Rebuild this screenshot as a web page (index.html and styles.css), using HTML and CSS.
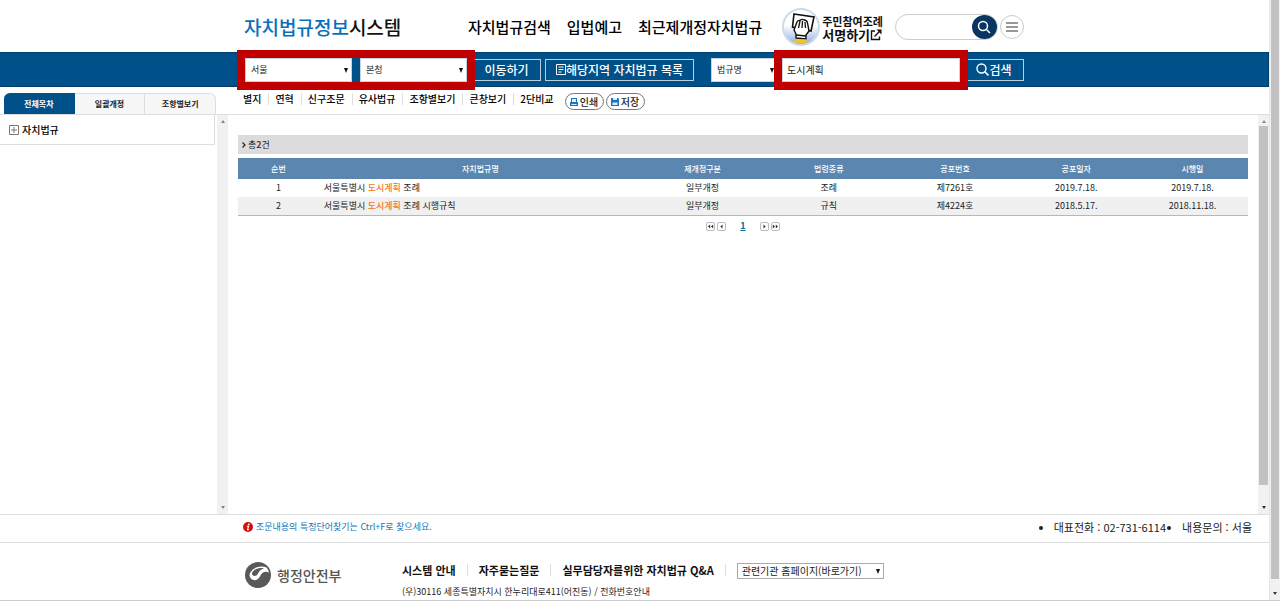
FILE: index.html
```html
<!DOCTYPE html>
<html lang="ko">
<head>
    <meta charset="UTF-8">
    <meta name="viewport" content="width=device-width, initial-scale=1.0">
    <title>자치법규정보시스템</title>
    <link rel="stylesheet" href="styles.css">
</head>
<body>
    <div class="window">
        <div class="page">
            <header class="header">
                <a class="logo" href="#"><span>자치법규정보</span>시스템</a>
                <nav class="main-nav">
                    <a href="#">자치법규검색</a>
                    <a href="#">입법예고</a>
                    <a href="#">최근제개정자치법규</a>
                </nav>
                <a class="petition" href="#">
                    <svg class="petition-icon" viewBox="0 0 38 38" width="38" height="38">
                        <defs>
                            <linearGradient id="sky" x1="0" y1="0" x2="0" y2="1">
                                <stop offset="0.45" stop-color="#fff"/>
                                <stop offset="1" stop-color="#8fa9e6"/>
                            </linearGradient>
                        </defs>
                        <circle cx="19" cy="19" r="18" fill="url(#sky)" stroke="#c9dce9" stroke-width="2"/>
                        <path d="M12 6 L32 9 L29 23 L10.500 19 Z" fill="#fff" stroke="#111" stroke-width="1.6"/>
                        <path d="M14 30 L14 26 L12 22 L15 14 Q16 12 18 12.500 Q20 10.500 22 12 Q25 12 25.500 15 L27 23 L24 27 L24 31 Z" fill="#fff" stroke="#111" stroke-width="1.4" stroke-linejoin="round"/>
                        <path d="M18 13 L16.500 20 M20.500 13 L20 20 M23 14 L23.500 20 M14 27 L24 28" fill="none" stroke="#111" stroke-width="1.3"/>
                        <path d="M12.500 31 L24.500 31.500 V34.500 Q18 36 12 34 Z" fill="#f7c51e"/>
                    </svg>
                    <span class="petition-text">
                        <span class="petition-small">주민참여조례</span>
                        <span class="petition-big">서명하기<svg viewBox="0 0 12 12" width="12" height="12"><path d="M5 2 H1.500 V10.500 H9.500 V7.500 M4.500 7.500 L10 2" fill="none" stroke="#111" stroke-width="1.4"/><path d="M6.500 0.500 H11.500 V5.500 Z" fill="#111"/></svg></span>
                    </span>
                </a>
                <form class="site-search">
                    <input type="text" aria-label="통합검색">
                    <button type="button" aria-label="검색">
                        <svg viewBox="0 0 14 14" width="14" height="14"><circle cx="6" cy="6" r="4.500" fill="none" stroke="#fff" stroke-width="1.5"/><path d="M9.500 9.500 L13 13" stroke="#fff" stroke-width="1.5"/></svg>
                    </button>
                </form>
                <button class="menu-button" type="button" aria-label="전체메뉴">
                    <svg viewBox="0 0 12 10" width="12" height="10"><path d="M0 1 H12 M0 5 H12 M0 9 H12" stroke="#777" stroke-width="1.4"/></svg>
                </button>
            </header>

            <form class="search-bar">
                <div class="marked region-fields">
                    <span class="select"><select aria-label="시도"><option>서울</option></select></span>
                    <span class="select"><select aria-label="시군구"><option>본청</option></select></span>
                </div>
                <button class="bar-button go-button" type="button">이동하기</button>
                <button class="bar-button list-button" type="button"><svg viewBox="0 0 10 11" width="10" height="11"><path d="M0.500 0.500 H9.500 V10.500 H0.500 Z M2.500 3 H7.500 M2.500 5.500 H7.500 M2.500 8 H5.500" fill="none" stroke="#fff"/></svg>해당지역 자치법규 목록</button>
                <span class="select kind-select"><select aria-label="검색구분"><option>법규명</option></select></span>
                <div class="marked keyword-field">
                    <input type="text" value="도시계획" aria-label="검색어">
                </div>
                <button class="bar-button find-button" type="button"><svg viewBox="0 0 13 13" width="13" height="13"><circle cx="5.500" cy="5.500" r="4.500" fill="none" stroke="#fff" stroke-width="1.4"/><path d="M8.800 8.800 L12.500 12.500" stroke="#fff" stroke-width="1.6"/></svg>검색</button>
            </form>

            <div class="sub-bar">
                <div class="tabs">
                    <button class="tab active" type="button">전체목차</button>
                    <button class="tab" type="button">일괄개정</button>
                    <button class="tab" type="button">조항별보기</button>
                </div>
                <nav class="tools">
                    <a href="#">별지</a>
                    <a href="#">연혁</a>
                    <a href="#">신구조문</a>
                    <a href="#">유사법규</a>
                    <a href="#">조항별보기</a>
                    <a href="#">큰창보기</a>
                    <a href="#">2단비교</a>
                </nav>
                <div class="tool-buttons">
                    <button type="button"><svg viewBox="0 0 8 8" width="8" height="8"><path d="M1 0 H7 V4 H8 V8 H0 V4 H1 Z" fill="#1b75bb"/><path d="M2 1 H6 V4 H2 Z M1.500 6 H6.500 V7 H1.500 Z" fill="#d8ecfa"/></svg>인쇄</button>
                    <button type="button"><svg viewBox="0 0 8 8" width="8" height="8"><path d="M0 0 H7 L8 1 V8 H0 Z" fill="#1b75bb"/><path d="M2 0 H6 V2 H2 Z M1.500 4.500 H6.500 V7 H1.500 Z" fill="#d8ecfa"/></svg>저장</button>
                </div>
            </div>

            <main class="main">
                <aside class="side">
                    <div class="tree">
                        <svg viewBox="0 0 10 10" width="10" height="10"><path d="M0.500 0.500 H9.500 V9.500 H0.500 Z M2 5 H8 M5 2 V8" fill="none" stroke="#777"/></svg>
                        <a href="#">자치법규</a>
                    </div>
                </aside>
                <div class="scroll side-scroll"><i class="arrow up"></i><i class="arrow down"></i></div>
                <section class="content">
                    <p class="total"><svg viewBox="0 0 4 6" width="4" height="6"><path d="M0.500 0.500 L3 3 L0.500 5.500" fill="none" stroke="#222" stroke-width="1.2"/></svg>총<b>2</b>건</p>
                    <table class="results">
                        <thead>
                            <tr>
                                <th class="col-no">순번</th>
                                <th class="col-name">자치법규명</th>
                                <th class="col-rev">제개정구분</th>
                                <th class="col-kind">법령종류</th>
                                <th class="col-num">공포번호</th>
                                <th class="col-date">공포일자</th>
                                <th>시행일</th>
                            </tr>
                        </thead>
                        <tbody>
                            <tr>
                                <td>1</td>
                                <td class="name"><a href="#">서울특별시 <em>도시계획</em> 조례</a></td>
                                <td>일부개정</td>
                                <td>조례</td>
                                <td>제7261호</td>
                                <td>2019.7.18.</td>
                                <td>2019.7.18.</td>
                            </tr>
                            <tr>
                                <td>2</td>
                                <td class="name"><a href="#">서울특별시 <em>도시계획</em> 조례 시행규칙</a></td>
                                <td>일부개정</td>
                                <td>규칙</td>
                                <td>제4224호</td>
                                <td>2018.5.17.</td>
                                <td>2018.11.18.</td>
                            </tr>
                        </tbody>
                    </table>
                    <div class="paging">
                        <button type="button" aria-label="처음"><svg viewBox="0 0 7 7" width="7" height="7"><path d="M3.200 1.500 V5.500 L1 3.500 Z M6.200 1.500 V5.500 L4 3.500 Z"/></svg></button>
                        <button type="button" aria-label="이전"><svg viewBox="0 0 7 7" width="7" height="7"><path d="M4.500 1.500 V5.500 L2.300 3.500 Z"/></svg></button>
                        <a href="#">1</a>
                        <button type="button" aria-label="다음"><svg viewBox="0 0 7 7" width="7" height="7"><path d="M2.500 1.500 V5.500 L4.700 3.500 Z"/></svg></button>
                        <button type="button" aria-label="마지막"><svg viewBox="0 0 7 7" width="7" height="7"><path d="M0.800 1.500 V5.500 L3 3.500 Z M3.800 1.500 V5.500 L6 3.500 Z"/></svg></button>
                    </div>
                </section>
                <div class="scroll content-scroll"><i class="arrow up"></i><span class="thumb"></span><i class="arrow down"></i></div>
            </main>

            <div class="notice">
                <p class="tip"><svg viewBox="0 0 10 10" width="10" height="10"><circle cx="5" cy="5" r="5" fill="#d80c0c"/><circle cx="5.800" cy="2.400" r="0.900" fill="#fff"/><path d="M3.800 4.200 H5.500 L4.600 7.800 H6" fill="none" stroke="#fff" stroke-width="1.1"/></svg>조문내용의 특정단어찾기는 Ctrl+F로 찾으세요.</p>
                <ul class="contact">
                    <li>대표전화 : 02-731-6114</li>
                    <li>내용문의 : 서울</li>
                </ul>
            </div>

            <footer class="footer">
                <a class="ministry" href="#">
                    <svg viewBox="0 0 26 26" width="26" height="26">
                        <circle cx="13" cy="13" r="13" fill="#595959"/>
                        <path d="M21.500 5.500 C14 2.500 5 7 4.500 13.500 C5.500 19.500 12.500 19.500 15 14.500 C16.500 10.500 20 8.500 24 10.500 C23.500 8.500 22.800 7 21.500 5.500 Z" fill="#fff"/>
                        <path d="M7 11 C9 7 14 5 19 6.500 C14.500 7.500 14 10 12.500 12.500 C10.500 15 6.500 14 7 11 Z" fill="#595959"/>
                    </svg>
                    행정안전부
                </a>
                <div class="footer-info">
                    <nav class="footer-links">
                        <a href="#">시스템 안내</a>
                        <a href="#">자주묻는질문</a>
                        <a href="#">실무담당자를위한 자치법규 Q&amp;A</a>
                    </nav>
                    <address>(우)30116 세종특별자치시 한누리대로411(어진동) / 전화번호안내</address>
                </div>
                <span class="select related"><select aria-label="관련기관"><option>관련기관 홈페이지(바로가기)</option></select></span>
            </footer>
        </div>
        <div class="scroll page-scroll"><span class="thumb"></span><i class="arrow down"></i></div>
    </div>
</body>
</html>
```

FILE: styles.css
```css
:root {
    --blue: #005189;
    --navy: #0a3563;
    --head: #5a86b0;
    --red: #c00000;
    --line: #dedede;
}

* {
    margin: 0;
    padding: 0;
    box-sizing: border-box;
}

body {
    font-family: 'Noto Sans CJK KR', 'Noto Sans', sans-serif;
    font-size: 9px;
    line-height: 18px;
    color: #222;
    background: #fff;
    height: 100vh;
    padding-bottom: 3px;
}

a {
    color: inherit;
    text-decoration: none;
}

button, input, select {
    font: inherit;
    color: inherit;
}

button {
    cursor: pointer;
}

svg {
    display: block;
    flex: none;
}

.window {
    display: flex;
    height: 100%;
    border-bottom: 1px solid #ccc;
}

.page {
    flex: 1;
    min-width: 0;
    display: flex;
    flex-direction: column;
}

/* header */
.header {
    display: flex;
    align-items: center;
    height: 52px;
    padding: 2px 0 0 244px;
}

.logo {
    width: 224px;
    font-size: 19px;
    font-weight: 500;
    color: #111;
}

.logo span {
    color: #0a6ebd;
}

.main-nav {
    display: flex;
    gap: 16px;
    margin-right: 20px;
    font-size: 15px;
    font-weight: 500;
    color: #000;
    white-space: nowrap;
}

.petition {
    display: flex;
    align-items: center;
    gap: 2px;
    margin-right: 12px;
    color: #111;
    font-weight: bold;
}

.petition-text {
    display: flex;
    flex-direction: column;
    padding-top: 2px;
    white-space: nowrap;
}

.petition-small {
    font-size: 11px;
    line-height: 14px;
}

.petition-big {
    display: flex;
    align-items: center;
    font-size: 13px;
    line-height: 14px;
}

.site-search {
    display: flex;
    width: 103px;
    height: 26px;
    margin-right: 2px;
    border: 1px solid #ccc;
    border-radius: 13px;
}

.site-search input {
    flex: 1;
    min-width: 0;
    padding-left: 10px;
    border: 0;
    outline: 0;
    background: transparent;
}

.site-search button {
    display: flex;
    align-items: center;
    justify-content: center;
    width: 25px;
    height: 24px;
    border: 0;
    border-radius: 50%;
    background: var(--navy);
}

.menu-button {
    display: flex;
    align-items: center;
    justify-content: center;
    width: 24px;
    height: 24px;
    border: 1px solid #ccc;
    border-radius: 50%;
    background: #fff;
}

/* blue search bar */
.search-bar {
    display: flex;
    align-items: center;
    height: 35px;
    padding-left: 245px;
    background: var(--blue);
    border: 1px solid #003c6c;
    border-left: 0;
}

.select {
    position: relative;
    display: flex;
}

.select::after {
    content: "";
    position: absolute;
    right: 4px;
    top: 50%;
    margin-top: -2px;
    border: 2px solid transparent;
    border-top: 5px solid #111;
    border-bottom: 0;
    pointer-events: none;
}

.select select {
    appearance: none;
    width: 100%;
    height: 24px;
    padding-left: 5px;
    border: 1px solid #c5d3df;
    border-radius: 0;
    background: #fff;
}

.marked {
    position: relative;
    display: flex;
    gap: 8px;
}

/* thick frame over the fields */
.marked::after {
    content: "";
    position: absolute;
    inset: -8px;
    border: 8px solid var(--red);
    pointer-events: none;
    z-index: 1;
}

.region-fields {
    width: 222px;
    margin-right: 5px;
}

.region-fields .select {
    flex: 1;
}

.kind-select {
    width: 67px;
    margin-left: 17px;
}

.keyword-field {
    width: 178px;
    margin: 0 4px;
}

.keyword-field input {
    width: 100%;
    height: 24px;
    padding-left: 4px;
    border: 1px solid #c5d3df;
    font-size: 10px;
}

.bar-button {
    display: flex;
    align-items: center;
    justify-content: center;
    height: 22px;
    border: 1px solid #b9cfdf;
    background: transparent;
    color: #fff;
    font-size: 12px;
    font-weight: 500;
    white-space: nowrap;
}

.go-button {
    width: 69px;
    margin-right: 4px;
}

.list-button {
    width: 149px;
}

.find-button {
    width: 60px;
}

/* tabs and tools */
.sub-bar {
    display: flex;
    height: 28px;
    border-bottom: 1px solid var(--line);
}

.tabs {
    display: flex;
    width: 243px;
    padding: 6px 27px 0 4px;
}

.tab {
    flex: 1;
    border: 1px solid var(--line);
    border-width: 1px 1px 0 0;
    background: #f7f7f7;
    font-size: 8px;
    font-weight: bold;
    line-height: 20px;
}

.tab.active {
    border-color: var(--blue);
    border-radius: 6px 0 0 0;
    background: var(--blue);
    color: #fff;
}

.tab:last-child {
    border-radius: 0 6px 0 0;
}

.tools {
    display: flex;
    align-items: center;
    height: 24px;
    font-size: 10px;
    font-weight: 500;
    line-height: 12px;
    color: #000;
}

.tools a {
    padding: 0 7px 0 6px;
    border-right: 1px solid var(--line);
}

.tools a:first-child {
    padding-left: 0;
}

.tools a:last-child {
    border-right: 0;
}

.tool-buttons {
    display: flex;
    gap: 2px;
    margin: 6px 0 0 4px;
}

.tool-buttons button {
    display: flex;
    align-items: center;
    justify-content: center;
    gap: 2px;
    width: 39px;
    height: 17px;
    border: 1px solid #777;
    border-radius: 9px;
    background: #fff;
    font-size: 10px;
    font-weight: 500;
    line-height: 14px;
}

/* main area */
.main {
    flex: 1;
    min-height: 0;
    display: flex;
}

.side {
    width: 217px;
    padding-right: 2px;
}

.tree {
    display: flex;
    align-items: center;
    gap: 3px;
    height: 30px;
    padding-left: 9px;
    border: 1px solid var(--line);
    border-width: 0 1px 1px 0;
    font-size: 10px;
    font-weight: 500;
    color: #000;
}

.scroll {
    display: flex;
    flex-direction: column;
    align-items: center;
    justify-content: space-between;
    width: 11px;
    padding: 5px 1px;
    background: #f1f1f1;
}

.arrow {
    border: 2px solid transparent;
}

.arrow.up {
    border-top: 0;
    border-bottom: 3px solid #888;
}

.arrow.down {
    border-bottom: 0;
    border-top: 3px solid #333;
}

.side-scroll .arrow.down {
    border-top-color: #888;
}

.thumb {
    flex: 1;
    width: 100%;
    background: #c1c1c1;
}

.content-scroll .thumb {
    margin: 3px 0 21px;
}

.page-scroll {
    padding-top: 0;
    border-left: 1px solid #e6e6e6;
}

.page-scroll .thumb {
    margin-bottom: 13px;
}

.content {
    flex: 1;
    padding: 20px 10px 0;
}

.total {
    display: flex;
    align-items: center;
    height: 19px;
    margin-bottom: 4px;
    padding-left: 4px;
    background: #dcdcdc;
}

.total svg {
    margin-right: 2px;
}

.total b {
    color: #a01010;
}

.results {
    width: 100%;
    table-layout: fixed;
    border-collapse: collapse;
    border-bottom: 1px solid #9fbdd8;
    text-align: center;
}

.results th {
    height: 21px;
    background: var(--head);
    color: #fff;
    font-size: 8px;
    font-weight: 500;
    line-height: 18px;
}

.results td {
    height: 18px;
}

.results tbody tr:nth-child(even) {
    background: #f0f0f0;
}

.results .name {
    padding-left: 5px;
    text-align: left;
}

.results em {
    color: #f47920;
    font-style: normal;
    font-weight: 500;
}

.col-no { width: 8%; }
.col-name { width: 32%; }
.col-rev { width: 12%; }
.col-kind { width: 13%; }
.col-num { width: 12%; }
.col-date { width: 12%; }

.paging {
    display: flex;
    align-items: center;
    justify-content: center;
    gap: 2px;
    height: 20px;
}

.paging button {
    width: 9px;
    height: 9px;
    border: 1px solid #bbb;
    border-radius: 2px;
    background: #fff;
}

.paging svg {
    fill: #333;
}

.paging a {
    margin: 0 12px;
    color: #0a6a9c;
    font-weight: bold;
    text-decoration: underline;
}

/* notice line */
.notice {
    display: flex;
    align-items: center;
    justify-content: space-between;
    height: 29px;
    padding: 0 17px 3px 243px;
    border: 1px solid var(--line);
    border-width: 1px 0;
}

.tip {
    display: flex;
    align-items: center;
    gap: 3px;
    color: #1277b5;
}

.contact {
    display: flex;
    gap: 16px;
    font-size: 11px;
}

/* footer */
.footer {
    display: flex;
    align-items: flex-start;
    height: 57px;
    padding: 19px 0 0 245px;
}

.ministry {
    display: flex;
    align-items: center;
    gap: 6px;
    width: 157px;
    font-size: 14px;
    font-weight: 500;
    color: #555;
}

.footer-links {
    display: flex;
    align-items: center;
    height: 16px;
    font-size: 11px;
    font-weight: bold;
    line-height: 12px;
    color: #111;
}

.footer-links a {
    padding: 0 11px;
    border-right: 1px solid var(--line);
}

.footer-links a:first-child {
    padding-left: 0;
}

.footer address {
    margin-top: 5px;
    font-style: normal;
}

.related {
    width: 147px;
    margin: 1px 0 0 11px;
}

.related select {
    height: 16px;
    padding-left: 4px;
    border-color: #aaa;
    font-size: 10px;
    line-height: 14px;
}
```
